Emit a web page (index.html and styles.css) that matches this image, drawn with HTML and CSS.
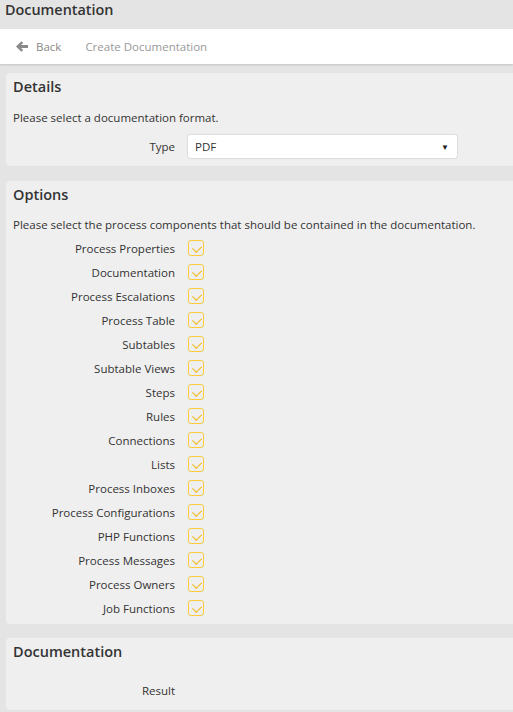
FILE: index.html
```html
<!DOCTYPE html>
<html>
<head>
<meta charset="utf-8">
<link rel="stylesheet" href="styles.css">
</head>
<body>
<div class="titlebar">Documentation</div>
<div class="nav">
  <span class="back"><svg class="arrow" width="12" height="11" viewBox="0 0 12 11"><path d="M0 5.5 L5.4 0.2 L7.2 2 L5 4.1 L12 4.1 L12 6.9 L5 6.9 L7.2 9 L5.4 10.8 Z" fill="#8a8a8a"/></svg>Back</span>
  <span class="crumb">Create Documentation</span>
</div>
<div class="panel details">
  <h2 class="ptitle">Details</h2>
  <p class="desc">Please select a documentation format.</p>
  <div class="row">
    <span class="label">Type</span>
    <div class="select"><span>PDF</span><span class="caret">&#9660;</span></div>
  </div>
</div>
<div class="panel options">
  <h2 class="ptitle">Options</h2>
  <p class="desc">Please select the process components that should be contained in the documentation.</p>
  <div class="list">
    <div class="crow"><span class="label">Process Properties</span><span class="cb"></span></div>
    <div class="crow"><span class="label">Documentation</span><span class="cb"></span></div>
    <div class="crow"><span class="label">Process Escalations</span><span class="cb"></span></div>
    <div class="crow"><span class="label">Process Table</span><span class="cb"></span></div>
    <div class="crow"><span class="label">Subtables</span><span class="cb"></span></div>
    <div class="crow"><span class="label">Subtable Views</span><span class="cb"></span></div>
    <div class="crow"><span class="label">Steps</span><span class="cb"></span></div>
    <div class="crow"><span class="label">Rules</span><span class="cb"></span></div>
    <div class="crow"><span class="label">Connections</span><span class="cb"></span></div>
    <div class="crow"><span class="label">Lists</span><span class="cb"></span></div>
    <div class="crow"><span class="label">Process Inboxes</span><span class="cb"></span></div>
    <div class="crow"><span class="label">Process Configurations</span><span class="cb"></span></div>
    <div class="crow"><span class="label">PHP Functions</span><span class="cb"></span></div>
    <div class="crow"><span class="label">Process Messages</span><span class="cb"></span></div>
    <div class="crow"><span class="label">Process Owners</span><span class="cb"></span></div>
    <div class="crow"><span class="label">Job Functions</span><span class="cb"></span></div>
  </div>
</div>
<div class="panel result">
  <h2 class="ptitle">Documentation</h2>
  <div class="rrow"><span class="label">Result</span></div>
</div>
</body>
</html>
```
FILE: styles.css
```css
html, body {
  margin: 0;
  padding: 0;
  background: #e4e4e4;
  font-family: "Open Sans", "Liberation Sans", sans-serif;
  font-size: 11.5px;
  color: #333;
  height: 712px;
  overflow: hidden;
}
.titlebar {
  height: 29px;
  box-sizing: border-box;
  padding: 0 0 0 5px;
  font-size: 14.4px;
  font-weight: 600;
  line-height: 20px;
  color: #333;
}
.nav {
  background: #fff;
  height: 35px;
  display: flex;
  align-items: center;
  padding-left: 16px;
  box-shadow: 0 1px 2px rgba(0,0,0,0.15);
}
.back {
  color: #888;
  display: flex;
  align-items: center;
}
.arrow {
  margin-right: 8px;
}
.crumb {
  color: #999;
  margin-left: 24px;
}
.panel {
  background: #efefef;
  margin-left: 6px;
  border-radius: 4px 0 0 4px;
  padding: 0 7px;
}
.details {
  margin-top: 9px;
  height: 93px;
}
.options {
  margin-top: 15px;
  height: 443px;
}
.result {
  margin-top: 14px;
  height: 72px;
}
.ptitle {
  margin: 0;
  padding-top: 4px;
  font-size: 14.5px;
  font-weight: 600;
  line-height: 19px;
}
.desc {
  margin: 13px 0 0;
  line-height: 17px;
}
.options .desc {
  margin-top: 12px;
}
.row {
  display: flex;
  align-items: center;
  margin-top: 9px;
}
.label {
  width: 162px;
  text-align: right;
  flex: none;
}
.select {
  margin-left: 13px;
  width: 269px;
  height: 23px;
  background: #fff;
  border-radius: 3px;
  box-shadow: 0 0 1px 1px rgba(0,0,0,0.08);
  display: flex;
  align-items: center;
  justify-content: space-between;
  padding: 0 8px 0 7px;
  box-sizing: border-box;
}
.caret {
  font-size: 8px;
  color: #222;
}
.list {
  margin-top: 3px;
  display: flex;
  flex-direction: column;
}
.crow {
  display: flex;
  align-items: center;
  height: 24px;
}
.cb {
  margin-left: 13px;
  width: 16px;
  height: 16px;
  box-sizing: border-box;
  border: 1px solid #fbcb3e;
  border-radius: 3px;
  position: relative;
}
.cb::after {
  content: "";
  position: absolute;
  left: 4.5px;
  top: 2.5px;
  width: 5px;
  height: 7px;
  border-right: 1px solid #efb91c;
  border-bottom: 1px solid #efb91c;
  transform: rotate(45deg);
}
.rrow {
  display: flex;
  margin-top: 21px;
  line-height: 17px;
}
```
